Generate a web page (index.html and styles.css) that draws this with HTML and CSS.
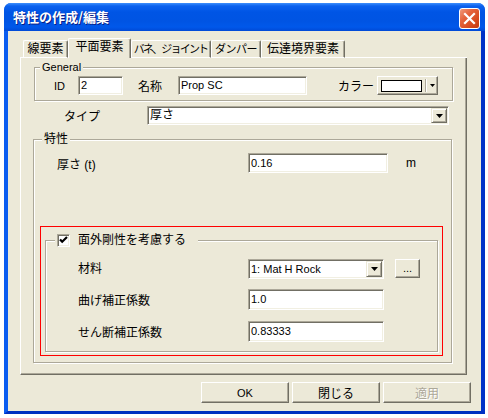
FILE: index.html
```html
<!DOCTYPE html>
<html lang="ja">
<head>
<meta charset="utf-8">
<title>特性の作成/編集</title>
<link rel="stylesheet" href="styles.css">
</head>
<body>
<div class="window">
  <div class="titlebar">
    <span class="title">特性の作成/編集</span>
    <span class="close">
      <svg width="19" height="19" viewBox="0 0 19 19"><path d="M5 5 L14 14 M14 5 L5 14" stroke="#fff" stroke-width="2.2" stroke-linecap="square"/></svg>
    </span>
  </div>
  <div class="frame">
    <div class="content">
      <div class="tabs">
        <span class="tab-line lead"></span>
        <span class="tab t1">線要素</span>
        <span class="tab active t2">平面要素</span>
        <span class="tab t3">バネ、ジョイント</span>
        <span class="tab t4">ダンパー</span>
        <span class="tab t5">伝達境界要素</span>
        <span class="tab-line fill"></span>
      </div>
      <div class="panel">
        <div class="group general">
          <span class="legend lat">General</span>
          <div class="row grow">
            <span class="id-lbl lat">ID</span>
            <span class="edit id-edit lat">2</span>
            <span class="name-lbl">名称</span>
            <span class="edit name-edit lat">Prop SC</span>
            <span class="color-lbl">カラー</span>
            <span class="colorbtn">
              <span class="swatch"></span>
              <span class="sep"></span>
              <svg class="arrow-sm" width="5" height="3" viewBox="0 0 5 3"><path d="M0 0 H5 L2.5 3 Z" fill="#000"/></svg>
            </span>
          </div>
        </div>
        <div class="row type-row">
          <span class="type-lbl">タイプ</span>
          <span class="combo type-combo">
            <span class="combo-text">厚さ</span>
            <span class="combo-btn"><svg width="7" height="4" viewBox="0 0 7 4"><path d="M0 0 H7 L3.5 4 Z" fill="#000"/></svg></span>
          </span>
        </div>
        <div class="group props">
          <span class="legend">特性</span>
          <div class="row thick-row">
            <span class="thick-lbl">厚さ (t)</span>
            <span class="edit thick-edit lat">0.16</span>
            <span class="unit lat">m</span>
          </div>
          <div class="highlight">
            <div class="group inner">
              <span class="legend check-legend">
                <span class="checkbox"><svg width="11" height="11" viewBox="0 0 11 11"><path d="M2 4.5 L4.2 6.8 L9 2" fill="none" stroke="#000" stroke-width="2.2"/></svg></span>
                <span class="check-text">面外剛性を考慮する</span>
              </span>
              <div class="irow mat-row">
                <span class="ilbl">材料</span>
                <span class="combo mat-combo">
                  <span class="combo-text lat">1: Mat H Rock</span>
                  <span class="combo-btn"><svg width="7" height="4" viewBox="0 0 7 4"><path d="M0 0 H7 L3.5 4 Z" fill="#000"/></svg></span>
                </span>
                <span class="btn dots lat">...</span>
              </div>
              <div class="irow bend-row">
                <span class="ilbl">曲げ補正係数</span>
                <span class="edit ival lat">1.0</span>
              </div>
              <div class="irow shear-row">
                <span class="ilbl">せん断補正係数</span>
                <span class="edit ival lat">0.83333</span>
              </div>
            </div>
          </div>
        </div>
      </div>
      <div class="buttons">
        <span class="btn dlg lat">OK</span>
        <span class="btn dlg">閉じる</span>
        <span class="btn dlg disabled">適用</span>
      </div>
    </div>
  </div>
</div>
</body>
</html>
```
FILE: styles.css
```css
* { box-sizing: border-box; }

html, body {
  margin: 0;
  padding: 0;
  background: #fff;
}

body {
  font-family: "Liberation Sans", "Noto Sans CJK JP", sans-serif;
  font-size: 12px;
  color: #000;
  width: 488px;
  height: 418px;
  overflow: hidden;
}

.lat { font-size: 11px; }

.window {
  margin: 3px 0 0 4px;
  width: 481px;
  height: 411px;
  display: flex;
  flex-direction: column;
  border-radius: 7px 7px 0 0;
  background: #0054e3;
  overflow: hidden;
}

.titlebar {
  height: 28px;
  flex: none;
  display: flex;
  align-items: flex-start;
  background: linear-gradient(to bottom, #3d8ffc 0px, #0b61ee 3px, #0055e5 9px, #0054e3 18px, #0058ea 24px, #0049d6 28px);
}

.title {
  margin: 5px 0 0 9px;
  line-height: 18px;
  font-family: "Noto Sans CJK JP", sans-serif;
  font-weight: bold;
  font-size: 13px;
  color: #fff;
  text-shadow: 1px 1px 0 #0a1e86;
}

.close {
  margin: 5px 5px 0 auto;
  width: 21px;
  height: 21px;
  border: 1px solid #fff;
  border-radius: 3px;
  background: linear-gradient(135deg, #f09a7c 0%, #e5643d 35%, #d5481d 75%, #c23a12 100%);
  display: flex;
  align-items: center;
  justify-content: center;
}

.close svg { display: block; }

.frame {
  flex: 1;
  display: flex;
  border-left: 4px solid #0a5cf0;
  border-right: 4px solid #0032c8;
  border-bottom: 3px solid #0030c0;
}

.content {
  flex: 1;
  background: #ece9d8;
  display: flex;
  flex-direction: column;
}

/* Tabs */
.tabs {
  margin: 7px 0 0 12px;
  width: 447px;
  height: 20px;
  display: flex;
  align-items: flex-end;
}

.tab-line {
  height: 1px;
  border-bottom: 1px solid #fff;
}
.tab-line.lead { width: 3px; }
.tab-line.fill { flex: 1; }

.tab {
  flex: none;
  height: 18px;
  border-top: 1px solid #fff;
  border-left: 1px solid #fff;
  border-right: 1px solid #716f64;
  border-bottom: 1px solid #fff;
  border-radius: 2px 2px 0 0;
  box-shadow: inset -1px 0 0 #aca899;
  background: #ece9d8;
  display: flex;
  align-items: center;
  justify-content: center;
  line-height: 14px;
  white-space: nowrap;
  overflow: hidden;
}

.tab.active {
  height: 20px;
  border-bottom: none;
  align-items: flex-start;
  padding-top: 1px;
}

.t1 { width: 45px; }
.t2 { width: 63px; }
.t3 { width: 80px; font-size: 11px; letter-spacing: -1.8px; padding-right: 1px; }
.t4 { width: 50px; font-size: 11px; letter-spacing: -0.5px; }
.t5 { width: 84px; }

/* Panel */
.panel {
  margin-left: 12px;
  width: 447px;
  height: 317px;
  border-left: 1px solid #fff;
  border-right: 1px solid #716f64;
  border-bottom: 1px solid #716f64;
  box-shadow: inset -1px -1px 0 #aca899;
  display: flex;
  flex-direction: column;
  align-items: flex-start;
}

.group {
  border: 1px solid #aca899;
  box-shadow: inset 1px 1px 0 #fff, 1px 1px 0 #fff;
  display: flex;
  flex-direction: column;
  align-items: flex-start;
}

.legend {
  margin-top: -7px;
  height: 13px;
  line-height: 13px;
  padding: 0 2px;
  background: #ece9d8;
  white-space: nowrap;
}

.row {
  display: flex;
  align-items: center;
}

/* General */
.general {
  margin: 9px 0 0 13px;
  width: 419px;
  height: 34px;
}
.general .legend { margin-left: 5px; }
.grow {
  margin-top: 2px;
  height: 19px;
}
.id-lbl { margin-left: 19px; width: 24px; }
.id-edit { width: 45px; }
.name-lbl { margin-left: 15px; width: 40px; }
.name-edit { width: 129px; }
.color-lbl { margin-left: 31px; width: 39px; }

.edit {
  height: 19px;
  background: #fff;
  border: 1px solid;
  border-color: #aca899 #fff #fff #aca899;
  box-shadow: inset 1px 1px 0 #716f64, inset -1px -1px 0 #f1efe2;
  padding: 0 0 0 2px;
  line-height: 17px;
  white-space: nowrap;
}

.colorbtn {
  width: 61px;
  height: 19px;
  border: 1px solid;
  border-color: #fff #716f64 #716f64 #fff;
  box-shadow: inset -1px -1px 0 #aca899;
  background: #ece9d8;
  display: flex;
  align-items: center;
  padding-left: 3px;
}
.swatch {
  width: 41px;
  height: 12px;
  background: #fff;
  border: 1px solid #000;
}
.sep {
  margin-left: 3px;
  width: 2px;
  height: 13px;
  border-left: 1px solid #aca899;
  border-right: 1px solid #fff;
}
.arrow-sm { margin-left: 3px; display: block; }

/* Type */
.type-row {
  margin: 5px 0 0 43px;
  height: 19px;
}
.type-lbl { width: 83px; }

.combo {
  height: 19px;
  background: #fff;
  border: 1px solid;
  border-color: #aca899 #fff #fff #aca899;
  box-shadow: inset 1px 1px 0 #716f64, inset -1px -1px 0 #f1efe2;
  display: flex;
  align-items: stretch;
}
.type-combo { width: 302px; }
.combo-text {
  flex: 1;
  padding-left: 2px;
  line-height: 17px;
  white-space: nowrap;
}
.combo-btn {
  width: 16px;
  margin: 1px 1px 1px 0;
  border: 1px solid;
  border-color: #ece9d8 #716f64 #716f64 #ece9d8;
  box-shadow: inset 1px 1px 0 #fff, inset -1px -1px 0 #aca899;
  background: #ece9d8;
  display: flex;
  align-items: center;
  justify-content: center;
}
.combo-btn svg { display: block; }

/* Props */
.props {
  margin: 14px 0 0 12px;
  width: 419px;
  height: 224px;
}
.props > .legend { margin-left: 8px; }

.thick-row {
  margin-top: 7px;
  height: 20px;
}
.thick-lbl { margin-left: 23px; width: 191px; }
.thick-edit { width: 140px; height: 20px; line-height: 18px; }
.unit { margin-left: 18px; font-size: 12px; }

.highlight {
  margin: 53px 0 0 6px;
  width: 403px;
  height: 130px;
  border: 1px solid #ff0000;
  display: flex;
  flex-direction: column;
  align-items: flex-start;
}

.inner {
  margin: 13px 0 0 4px;
  width: 393px;
  height: 112px;
}

.check-legend {
  margin-left: 9px;
  padding: 0 12px 0 2px;
  display: flex;
  align-items: center;
}
.checkbox {
  width: 13px;
  height: 13px;
  background: #fff;
  border: 1px solid;
  border-color: #aca899 #fff #fff #aca899;
  box-shadow: inset 1px 1px 0 #716f64, inset -1px -1px 0 #f1efe2;
  display: flex;
  align-items: center;
  justify-content: center;
}
.checkbox svg { display: block; }
.check-text { margin-left: 8px; }

.irow {
  margin-left: 32px;
  display: flex;
  align-items: center;
}
.ilbl { width: 170px; }
.mat-row { margin-top: 12px; height: 20px; align-items: flex-start; }
.mat-row .ilbl { line-height: 20px; }
.mat-combo { width: 136px; height: 20px; }
.mat-combo .combo-text { line-height: 18px; }
.bend-row { margin-top: 10px; height: 21px; }
.shear-row { margin-top: 11px; height: 21px; }
.ival { width: 136px; height: 21px; line-height: 19px; }

.btn {
  border: 1px solid;
  border-color: #fff #716f64 #716f64 #fff;
  box-shadow: inset -1px -1px 0 #aca899;
  background: #ece9d8;
  display: flex;
  align-items: center;
  justify-content: center;
  white-space: nowrap;
}
.dots {
  margin-left: 11px;
  width: 25px;
  height: 19px;
  line-height: 19px;
}

/* Dialog buttons */
.buttons {
  margin: 7px 10px 0 0;
  display: flex;
  justify-content: flex-end;
  gap: 3px;
}
.dlg {
  width: 88px;
  height: 21px;
}
.disabled {
  color: #aca899;
  text-shadow: 1px 1px 0 #fff;
}
```
